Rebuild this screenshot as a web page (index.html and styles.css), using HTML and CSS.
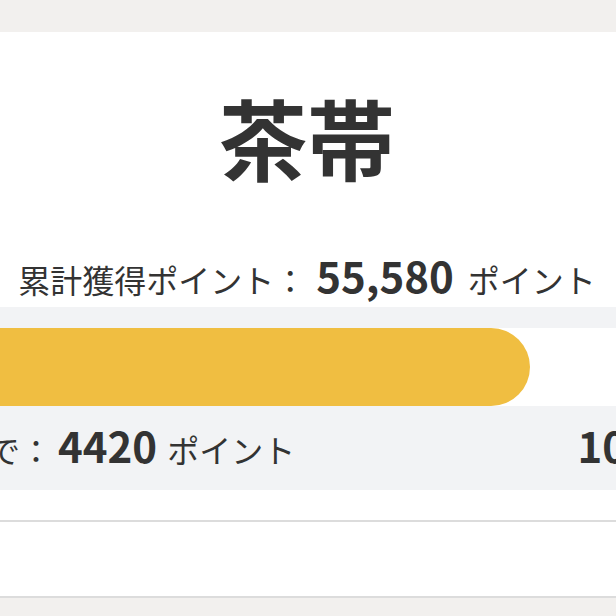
FILE: index.html
```html
<!DOCTYPE html>
<html lang="ja">
<head>
  <meta charset="UTF-8">
  <title>帯ランク</title>
  <link rel="stylesheet" href="styles.css">
</head>
<body>
  <div class="page">
    <div class="card belt-card">
      <h1 class="belt-name">茶帯</h1>
      <div class="total">
        <span class="label">累計獲得ポイント：</span><span class="num">55,580</span><span class="unit">ポイント</span>
      </div>
      <div class="progress-box">
        <div class="track">
          <div class="fill" style="width: 638px"></div>
        </div>
        <div class="next-row">
          <div class="next">
            <span class="label">黒帯まで：</span><span class="num">4420</span><span class="unit">ポイント</span>
          </div>
          <div class="goal"><span class="num">10,000</span></div>
        </div>
      </div>
    </div>
    <div class="card sub-card"></div>
  </div>
</body>
</html>
```

FILE: styles.css
```css
html, body {
  margin: 0;
  padding: 0;
}
body {
  background: #f2f0ee;
  color: #333;
  font-family: "Noto Sans CJK JP", "Noto Sans", sans-serif;
  overflow: hidden;
  height: 616px;
}
.page {
  width: 870px;
  margin-left: -128px;
  padding-top: 32px;
}
.card {
  background: #fff;
  border-bottom: 2px solid #dcdcdc;
}
.belt-card {
  padding: 52px 0 30px;
}
.belt-name {
  margin: 0;
  font-size: 88px;
  font-weight: 700;
  line-height: 104px;
  text-align: center;
}
.total {
  margin-top: 66px;
  font-size: 32px;
  line-height: 48px;
  text-align: center;
}
.num {
  font-size: 42px;
  font-weight: 700;
  line-height: 1;
  margin: 0 10px 0 6px;
}
.total .num {
  margin: 0 14px 0 10px;
}
.progress-box {
  margin-top: 4px;
  background: #f2f3f5;
  padding: 21px 27px 0 20px;
}
.track {
  height: 78px;
  background: #fff;
  border-radius: 39px;
  overflow: hidden;
}
.fill {
  height: 100%;
  background: #f0be41;
  border-radius: 39px;
}
.next-row {
  display: flex;
  justify-content: space-between;
  align-items: center;
  height: 84px;
  font-size: 32px;
}
.goal .num {
  margin: 0;
}
.sub-card {
  height: 74px;
}
```
